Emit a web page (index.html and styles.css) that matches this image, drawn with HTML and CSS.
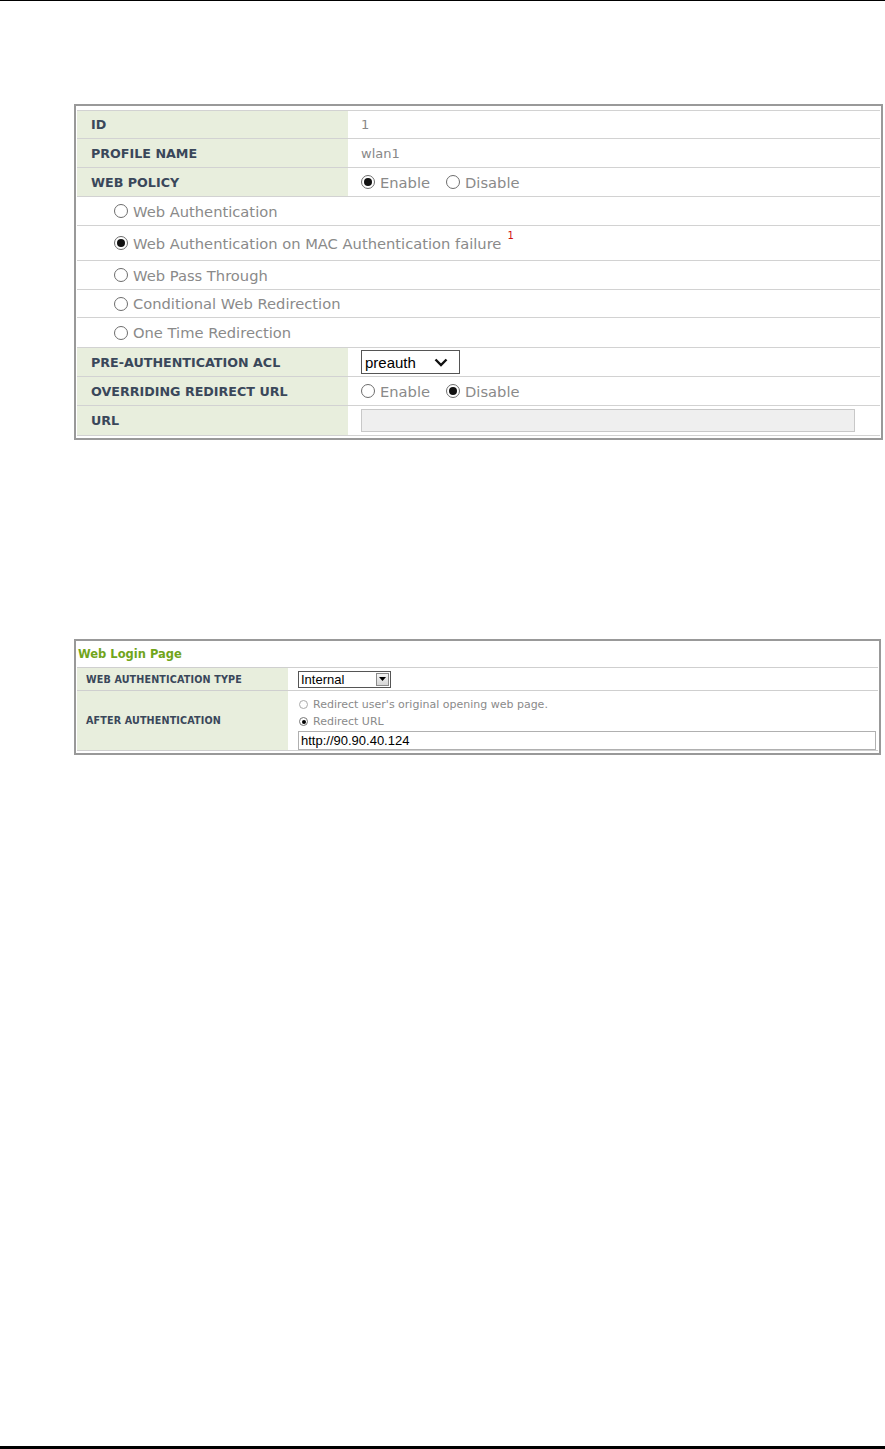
FILE: index.html
```html
<!DOCTYPE html>
<html>
<head>
<meta charset="utf-8">
<link rel="stylesheet" href="styles.css">
</head>
<body>
<div class="rule-top"></div>
<div class="page">
  <div class="box1">
    <div class="row r27">
      <div class="lab">ID</div>
      <div class="val">1</div>
    </div>
    <div class="row">
      <div class="lab">PROFILE NAME</div>
      <div class="val">wlan1</div>
    </div>
    <div class="row">
      <div class="lab">WEB POLICY</div>
      <div class="val">
        <span class="opt"><span class="rd on"></span><span class="big">Enable</span></span>
        <span class="opt"><span class="rd"></span><span class="big">Disable</span></span>
      </div>
    </div>
    <div class="row sub">
      <span class="opt"><span class="rd"></span><span class="big">Web Authentication</span></span>
    </div>
    <div class="row sub tall">
      <span class="opt"><span class="rd on"></span><span class="big">Web Authentication on MAC Authentication failure</span><span class="note">1</span></span>
    </div>
    <div class="row sub">
      <span class="opt"><span class="rd"></span><span class="big">Web Pass Through</span></span>
    </div>
    <div class="row sub r27">
      <span class="opt"><span class="rd"></span><span class="big">Conditional Web Redirection</span></span>
    </div>
    <div class="row sub r29">
      <span class="opt"><span class="rd"></span><span class="big">One Time Redirection</span></span>
    </div>
    <div class="row">
      <div class="lab">PRE-AUTHENTICATION ACL</div>
      <div class="val">
        <div class="sel1"><span>preauth</span>
          <svg width="14" height="9" viewBox="0 0 14 9"><polyline points="1.5,1.5 7,7 12.5,1.5" fill="none" stroke="#111" stroke-width="2.4"/></svg>
        </div>
      </div>
    </div>
    <div class="row">
      <div class="lab">OVERRIDING REDIRECT URL</div>
      <div class="val">
        <span class="opt"><span class="rd"></span><span class="big">Enable</span></span>
        <span class="opt"><span class="rd on"></span><span class="big">Disable</span></span>
      </div>
    </div>
    <div class="row r29 last">
      <div class="lab">URL</div>
      <div class="val"><div class="urlbox"></div></div>
    </div>
  </div>

  <div class="box2">
    <div class="head">Web Login Page</div>
    <div class="row2 h22">
      <div class="lab2">WEB AUTHENTICATION TYPE</div>
      <div class="val2">
        <div class="sel2"><span>Internal</span><span class="btn"><svg width="7" height="4" viewBox="0 0 7 4"><polygon points="0,0 7,0 3.5,4" fill="#000"/></svg></span></div>
      </div>
    </div>
    <div class="row2 h59 last">
      <div class="lab2">AFTER AUTHENTICATION</div>
      <div class="val2 col">
        <div class="sopt"><span class="srd"></span>Redirect user's original opening web page.</div>
        <div class="sopt"><span class="srd on"></span>Redirect URL</div>
        <div class="inp">http://90.90.40.124</div>
      </div>
    </div>
  </div>
</div>
<div class="rule-bottom"></div>
</body>
</html>
```
FILE: styles.css
```css
html, body {
  margin: 0;
  padding: 0;
  background: #fff;
}
body {
  width: 885px;
  height: 1449px;
  display: flex;
  flex-direction: column;
  font-family: "DejaVu Sans", Verdana, sans-serif;
}
.rule-top {
  height: 1px;
  background: #000;
}
.page {
  flex: 1;
  padding: 103px 0 0 74px;
}
.rule-bottom {
  height: 3px;
  background: #000;
}

/* ---------- box 1 ---------- */
.box1 {
  width: 803px;
  border: 2px solid #999;
  padding: 4px 1px 2px 1px;
}
.row {
  display: flex;
  height: 28px;
  border-top: 1px solid #d2d2d2;
}
.row.r27 { height: 27px; }
.row.r29 { height: 29px; }
.row.tall { height: 34px; }
.row.last { border-bottom: 1px solid #d2d2d2; }
.lab {
  width: 257px;
  padding-left: 14px;
  background: #e8eedd;
  color: #3a475a;
  font-weight: bold;
  font-size: 12.7px;
  display: flex;
  align-items: center;
}
.val {
  flex: 1;
  padding-left: 13px;
  display: flex;
  align-items: center;
  gap: 16px;
  color: #888;
  font-size: 13px;
}
.row.sub {
  padding-left: 37px;
  align-items: center;
}
.opt {
  display: inline-flex;
  align-items: center;
  color: #8a8a8a;
}
.big {
  font-size: 14.7px;
  margin-left: 5px;
}
.rd {
  width: 14px;
  height: 14px;
  box-sizing: border-box;
  border: 1px solid #6d6d6d;
  border-radius: 50%;
  display: inline-flex;
  align-items: center;
  justify-content: center;
  background: #fff;
}
.rd.on::after {
  content: "";
  width: 8px;
  height: 8px;
  border-radius: 50%;
  background: #111;
}
.note {
  color: #d01010;
  font-size: 10px;
  align-self: flex-start;
  margin-left: 6px;
  margin-top: -4px;
  line-height: 1;
}
.sel1 {
  width: 99px;
  height: 24px;
  box-sizing: border-box;
  border: 1px solid #555;
  background: #fff;
  display: flex;
  align-items: center;
  justify-content: space-between;
  padding: 0 11px 0 3px;
  font-family: "Liberation Sans", Arial, sans-serif;
  font-size: 15px;
  color: #000;
}
.urlbox {
  width: 494px;
  height: 23px;
  box-sizing: border-box;
  border: 1px solid #c8c8c8;
  background: #efefef;
}

/* ---------- box 2 ---------- */
.box2 {
  margin-top: 199px;
  width: 801px;
  border: 2px solid #999;
  padding: 0 1px 2px 1px;
}
.head {
  height: 26px;
  display: flex;
  align-items: center;
  padding-left: 1px;
  color: #71a51b;
  font-weight: bold;
  font-size: 11.5px;
}
.row2 {
  display: flex;
  border-top: 1px solid #cfcfcf;
}
.row2.h22 { height: 22px; }
.row2.h59 { height: 59px; }
.row2.last { border-bottom: 1px solid #cfcfcf; }
.lab2 {
  width: 202px;
  padding-left: 9px;
  background: #e8eedd;
  color: #3a475a;
  font-weight: bold;
  font-size: 9.6px;
  letter-spacing: 0.15px;
  display: flex;
  align-items: center;
}
.val2 {
  flex: 1;
  padding-left: 10px;
  display: flex;
  align-items: center;
}
.val2.col {
  flex-direction: column;
  align-items: flex-start;
  justify-content: flex-start;
  padding-top: 5px;
}
.sel2 {
  width: 93px;
  height: 17px;
  box-sizing: border-box;
  border: 1px solid #555;
  background: #fff;
  display: flex;
  align-items: center;
  justify-content: space-between;
  padding: 0 1px 0 2px;
  font-family: "Liberation Sans", Arial, sans-serif;
  font-size: 13px;
  color: #000;
}
.btn {
  width: 13px;
  height: 13px;
  box-sizing: border-box;
  border: 1px solid #8a8a8a;
  background: linear-gradient(#f4f4f4, #d6d6d6);
  display: flex;
  align-items: center;
  justify-content: center;
}
.sopt {
  display: flex;
  align-items: center;
  height: 17px;
  font-size: 11px;
  color: #8a8a8a;
}
.srd {
  width: 9px;
  height: 9px;
  box-sizing: border-box;
  border: 1px solid #aaa;
  border-radius: 50%;
  margin: 0 5px 0 1px;
  display: inline-flex;
  align-items: center;
  justify-content: center;
}
.srd.on {
  border-color: #777;
}
.srd.on::after {
  content: "";
  width: 4px;
  height: 4px;
  border-radius: 50%;
  background: #000;
}
.inp {
  margin-top: 1px;
  width: 578px;
  height: 19px;
  box-sizing: border-box;
  border: 1px solid #b0b0b0;
  padding-left: 2px;
  display: flex;
  align-items: center;
  font-family: "Liberation Sans", Arial, sans-serif;
  font-size: 13px;
  color: #000;
}
```
